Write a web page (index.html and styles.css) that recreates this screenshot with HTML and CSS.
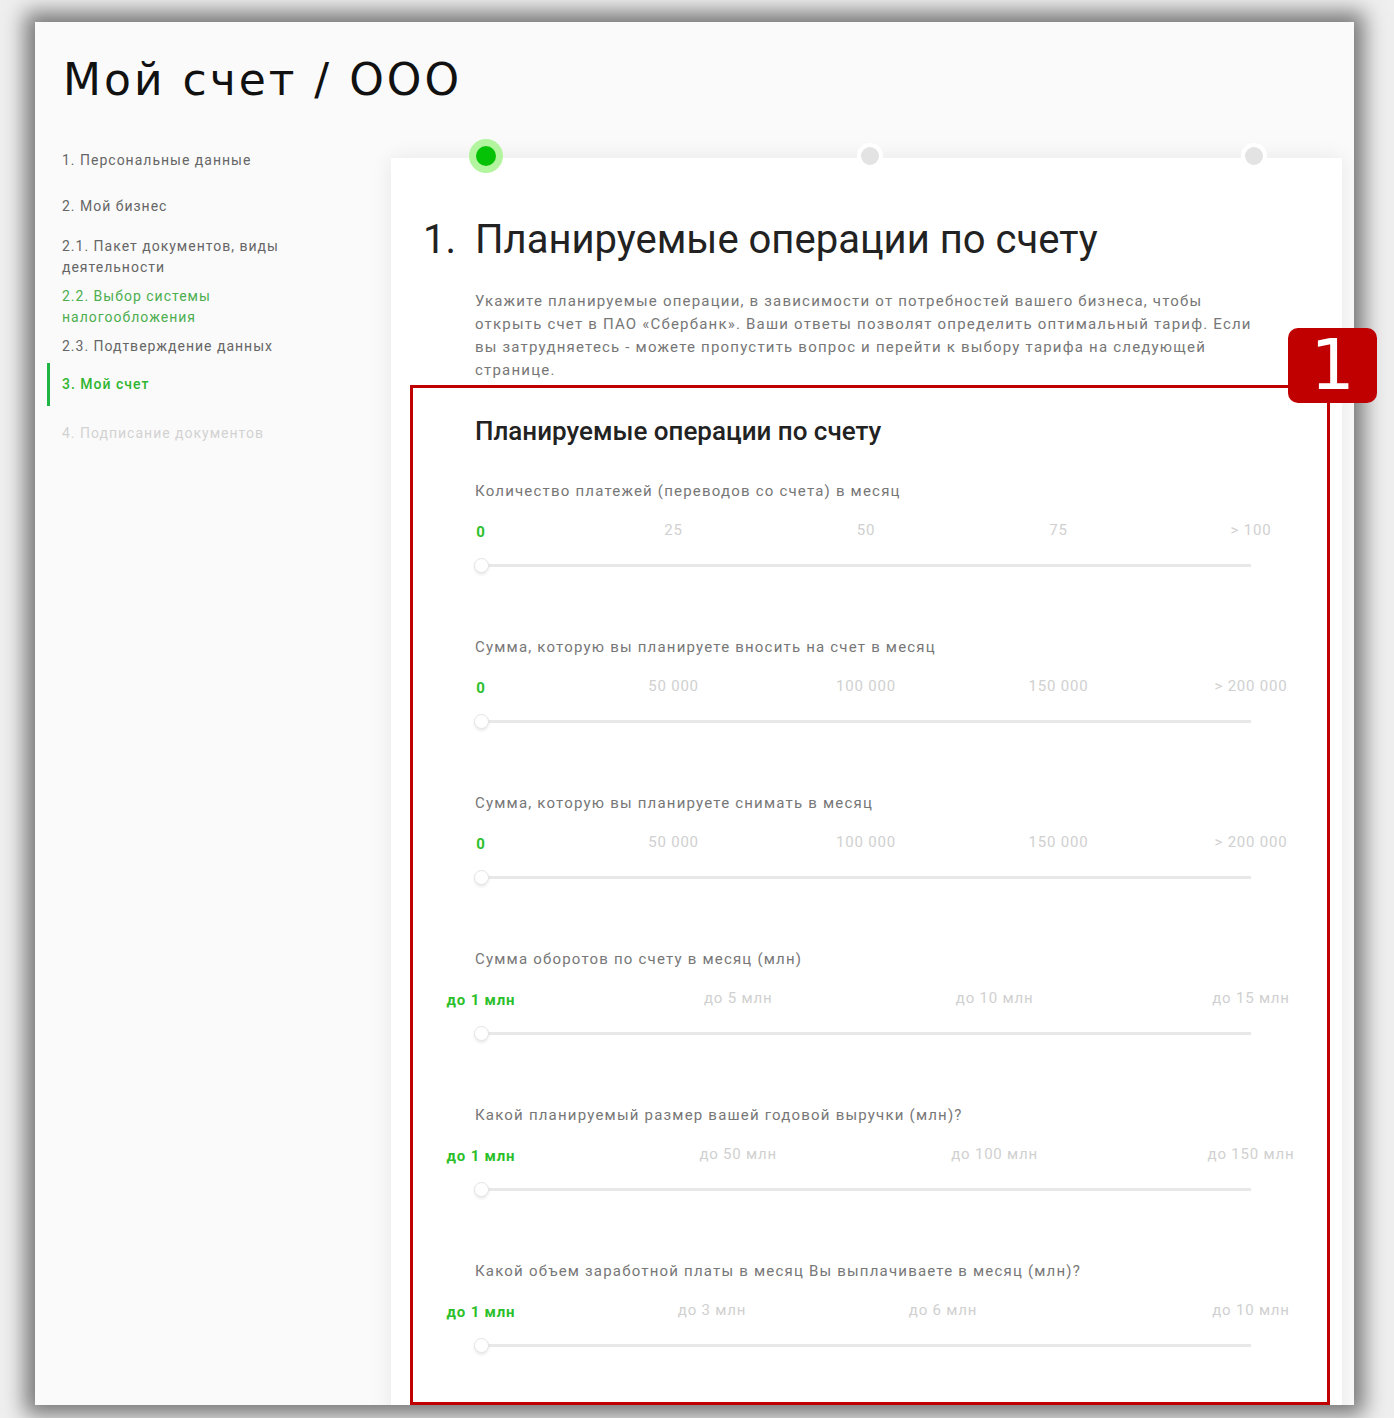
FILE: index.html
```html
<!DOCTYPE html>
<html lang="ru">
<head>
    <meta charset="UTF-8">
    <meta name="viewport" content="width=device-width, initial-scale=1.0">
    <title>Мой счет</title>
    <link rel="stylesheet" href="styles.css">
</head>
<body>

<div class="screen">
    <h1 class="page-title">Мой счет / ООО</h1>

    <div class="layout">
        <ul class="steps">
            <li class="step">1. Персональные данные</li>
            <li class="step">2. Мой бизнес</li>
            <li class="step tight">2.1. Пакет документов, виды<br>деятельности</li>
            <li class="step sub done">2.2. Выбор системы<br>налогообложения</li>
            <li class="step sub">2.3. Подтверждение данных</li>
            <li class="step active">3. Мой счет</li>
            <li class="step next disabled">4. Подписание документов</li>
        </ul>

        <div class="card">
            <div class="stepper">
                <span class="dot current"></span>
                <span class="dot"></span>
                <span class="dot"></span>
            </div>

            <h2 class="card-title"><span class="num">1.</span>Планируемые операции по счету</h2>
            <p class="intro">Укажите планируемые операции, в зависимости от потребностей вашего бизнеса, чтобы открыть счет в ПАО «Сбербанк». Ваши ответы позволят определить оптимальный тариф. Если вы затрудняетесь - можете пропустить вопрос и перейти к выбору тарифа на следующей странице.</p>

            <h3 class="section-title">Планируемые операции по счету</h3>

            <div class="question">
                <div class="label">Количество платежей (переводов со счета) в месяц</div>
                <div class="ticks">
                    <span class="tick current" style="left: 0%">0</span>
                    <span class="tick" style="left: 25%">25</span>
                    <span class="tick" style="left: 50%">50</span>
                    <span class="tick" style="left: 75%">75</span>
                    <span class="tick" style="left: 100%">&gt; 100</span>
                </div>
                <div class="track"><span class="thumb"></span></div>
            </div>

            <div class="question">
                <div class="label">Сумма, которую вы планируете вносить на счет в месяц</div>
                <div class="ticks">
                    <span class="tick current" style="left: 0%">0</span>
                    <span class="tick" style="left: 25%">50 000</span>
                    <span class="tick" style="left: 50%">100 000</span>
                    <span class="tick" style="left: 75%">150 000</span>
                    <span class="tick" style="left: 100%">&gt; 200 000</span>
                </div>
                <div class="track"><span class="thumb"></span></div>
            </div>

            <div class="question">
                <div class="label">Сумма, которую вы планируете снимать в месяц</div>
                <div class="ticks">
                    <span class="tick current" style="left: 0%">0</span>
                    <span class="tick" style="left: 25%">50 000</span>
                    <span class="tick" style="left: 50%">100 000</span>
                    <span class="tick" style="left: 75%">150 000</span>
                    <span class="tick" style="left: 100%">&gt; 200 000</span>
                </div>
                <div class="track"><span class="thumb"></span></div>
            </div>

            <div class="question">
                <div class="label">Сумма оборотов по счету в месяц (млн)</div>
                <div class="ticks">
                    <span class="tick current" style="left: 0%">до 1 млн</span>
                    <span class="tick" style="left: 33.4%">до 5 млн</span>
                    <span class="tick" style="left: 66.7%">до 10 млн</span>
                    <span class="tick" style="left: 100%">до 15 млн</span>
                </div>
                <div class="track"><span class="thumb"></span></div>
            </div>

            <div class="question">
                <div class="label">Какой планируемый размер вашей годовой выручки (млн)?</div>
                <div class="ticks">
                    <span class="tick current" style="left: 0%">до 1 млн</span>
                    <span class="tick" style="left: 33.4%">до 50 млн</span>
                    <span class="tick" style="left: 66.7%">до 100 млн</span>
                    <span class="tick" style="left: 100%">до 150 млн</span>
                </div>
                <div class="track"><span class="thumb"></span></div>
            </div>

            <div class="question">
                <div class="label">Какой объем заработной платы в месяц Вы выплачиваете в месяц (млн)?</div>
                <div class="ticks">
                    <span class="tick current" style="left: 0%">до 1 млн</span>
                    <span class="tick" style="left: 30%">до 3 млн</span>
                    <span class="tick" style="left: 60%">до 6 млн</span>
                    <span class="tick" style="left: 100%">до 10 млн</span>
                </div>
                <div class="track"><span class="thumb"></span></div>
            </div>
        </div>
    </div>
</div>

<!-- annotation on top of the screenshot -->
<div class="mark-box"></div>
<div class="mark-badge">1</div>

</body>
</html>
```

FILE: styles.css
```css
body {
    margin: 0;
    height: 1418px;
    overflow: hidden;
    position: relative;
    background-color: #efefef;
    font-family: Roboto, 'Liberation Sans', sans-serif;
    color: #666;
}
.screen {
    margin: 22px 0 0 35px;
    width: 1319px;
    height: 1383px;
    overflow: hidden;
    background-color: #fafafa;
    box-shadow: 0 0 20px 10px rgba(0, 0, 0, 0.5);
}
.page-title {
    margin: 0;
    padding: 33px 0 0 28px;
    height: 50px;
    line-height: 50px;
    font-family: 'DejaVu Sans', sans-serif;
    font-size: 44px;
    font-weight: normal;
    letter-spacing: 3px;
    color: #111;
}
.layout {
    display: flex;
    align-items: flex-start;
    margin-top: 45px;
    padding-left: 27px;
}

/* left menu */
.steps {
    width: 329px;
    flex-shrink: 0;
    margin: 0;
    padding: 0;
    list-style: none;
}
.step {
    font-size: 14px;
    line-height: 21px;
    letter-spacing: 1px;
    color: #666;
}
.step + .step {
    margin-top: 25px;
}
.step.tight {
    margin-top: 19px;
}
.step.sub {
    margin-top: 8px;
}
.step.next {
    margin-top: 17px;
}
.step.done {
    color: #4cae4f;
}
.step.active {
    margin: 6px 0 0 -15px;
    padding: 11px 0 11px 12px;
    border-left: 3px solid #1fb545;
    color: #2fb52f;
    font-weight: 500;
}
.step.disabled {
    color: #d2d2d2;
}

/* main card */
.card {
    position: relative;
    flex: 1;
    margin: 8px 12px 0 0;
    min-height: 1300px;
    padding: 58px 91px 0 32px;
    background: #fff;
    box-shadow: 0 0 20px rgba(0, 0, 0, 0.08);
}
.stepper {
    position: absolute;
    top: -2px;
    left: 95px;
    right: 88px;
    display: flex;
    justify-content: space-between;
}
.dot {
    width: 26px;
    height: 26px;
    margin: -13px;
    box-sizing: border-box;
    border-radius: 50%;
    border: 4px solid #fff;
    background: #e3e3e3;
}
.dot.current {
    width: 20px;
    height: 20px;
    margin: -10px;
    border: none;
    background: #06c206;
    box-shadow: 0 0 0 7px #b2f59e;
}
.card-title {
    margin: 0;
    font-size: 40px;
    line-height: 48px;
    font-weight: normal;
    color: #222;
}
.card-title .num {
    display: inline-block;
    width: 52px;
}
.intro {
    margin: 26px -8px 0 52px;
    font-size: 15px;
    line-height: 23px;
    letter-spacing: 1.2px;
    color: #777;
}
.section-title {
    margin: 34px 0 0 52px;
    font-size: 26px;
    line-height: 30px;
    font-weight: 500;
    color: #222;
}
.question {
    margin: 35px 0 0 52px;
}
.question + .question {
    margin-top: 70px;
}
.label {
    font-size: 15px;
    line-height: 20px;
    letter-spacing: 1.2px;
    color: #777;
}
.ticks {
    position: relative;
    width: 770px;
    height: 20px;
    margin: 19px 0 0 6px;
}
.tick {
    position: absolute;
    top: 0;
    transform: translateX(-50%);
    white-space: nowrap;
    font-size: 15px;
    line-height: 20px;
    letter-spacing: 0.8px;
    color: #d0d0d0;
}
.tick.current {
    top: 2px;
    font-weight: bold;
    color: #2cbf2c;
}
.track {
    position: relative;
    width: 770px;
    height: 3px;
    margin: 24px 0 0 6px;
    background: #e8e8e8;
}
.thumb {
    position: absolute;
    left: -7px;
    top: -6px;
    width: 15px;
    height: 15px;
    box-sizing: border-box;
    border-radius: 50%;
    border: 1px solid #e4e4e4;
    background: #fff;
    box-shadow: 0 2px 3px rgba(0, 0, 0, 0.08);
}

/* annotation */
.mark-box {
    position: absolute;
    left: 410px;
    top: 385px;
    width: 920px;
    height: 1020px;
    box-sizing: border-box;
    border: 3px solid #c00000;
}
.mark-badge {
    position: absolute;
    left: 1288px;
    top: 328px;
    width: 89px;
    height: 75px;
    border-radius: 10px;
    background: #c00000;
    color: #fff;
    text-align: center;
    font-family: 'DejaVu Sans', sans-serif;
    font-size: 70px;
    line-height: 75px;
}
```
